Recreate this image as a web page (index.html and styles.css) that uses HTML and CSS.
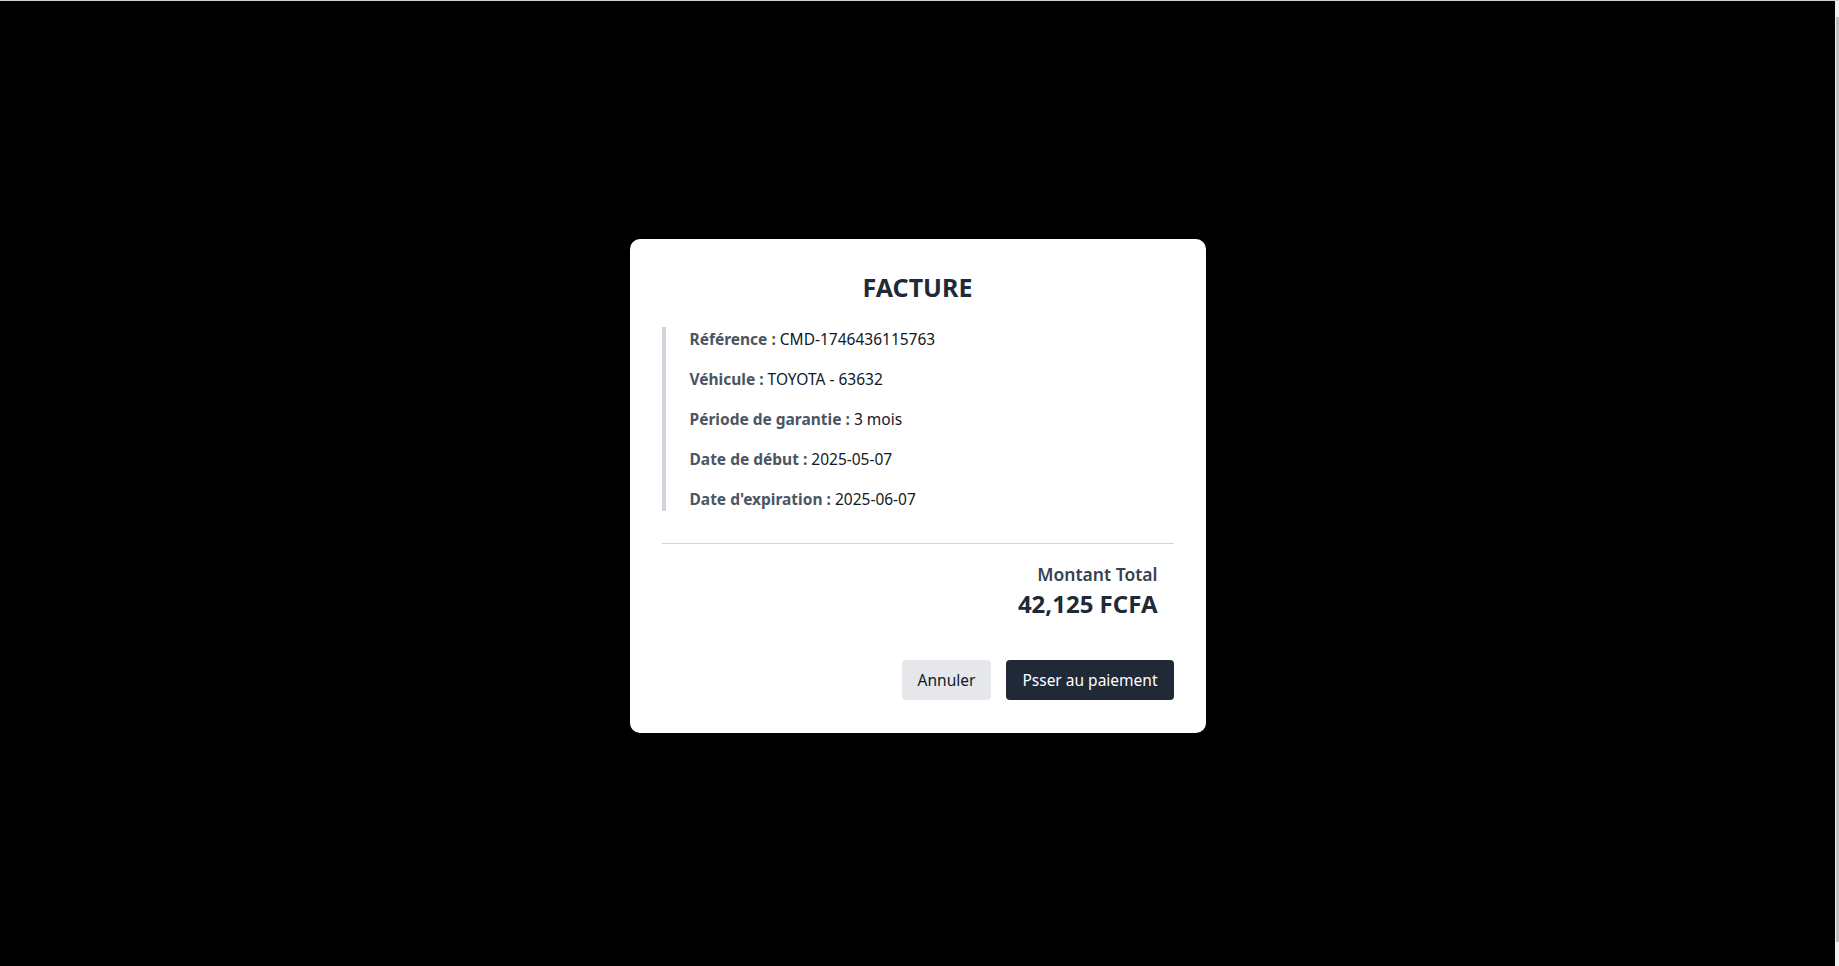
FILE: index.html
```html
<!DOCTYPE html>
<html lang="fr">
<head>
<meta charset="utf-8">
<title>Facture</title>
<link rel="stylesheet" href="styles.css">
</head>
<body>
<div class="page">
  <div class="overlay">
    <div class="modal">
      <h2 class="modal-title">FACTURE</h2>
      <div class="details">
        <p class="row"><span class="label">Référence :</span> CMD-1746436115763</p>
        <p class="row"><span class="label">Véhicule :</span> TOYOTA - 63632</p>
        <p class="row"><span class="label">Période de garantie :</span> 3 mois</p>
        <p class="row"><span class="label">Date de début :</span> 2025-05-07</p>
        <p class="row"><span class="label">Date d'expiration :</span> 2025-06-07</p>
      </div>
      <div class="total">
        <p class="total-label">Montant Total</p>
        <p class="total-amount">42,125 FCFA</p>
      </div>
      <div class="actions">
        <button class="btn btn-cancel">Annuler</button>
        <button class="btn btn-pay">Psser au paiement</button>
      </div>
    </div>
  </div>
  <div class="scrollbar"><div class="scroll-thumb"></div></div>
</div>
</body>
</html>
```

FILE: styles.css
```css
* { box-sizing: border-box; }
html, body { margin: 0; padding: 0; height: 100%; }
body {
  font-family: "Noto Sans", "DejaVu Sans", sans-serif;
  background: #000;
}
.page {
  display: flex;
  height: 100%;
  border-top: 1px solid #d0d0d0;
}
.overlay {
  flex: 1;
  background: #000;
  display: flex;
  align-items: center;
  justify-content: center;
  padding-top: 5px;
}
.scrollbar {
  width: 4px;
  background: #f1f1f1;
  padding: 16px 0 24px 1px;
}
.scroll-thumb {
  height: 100%;
  background: #c1c1c1;
}
.modal {
  width: 576px;
  background: #fff;
  border-radius: 10px;
  padding: 32px 32px 33px;
}
.modal-title {
  margin: 0 0 24px;
  text-align: center;
  font-size: 25px;
  line-height: 32px;
  font-weight: 700;
  color: #1f2937;
}
.details {
  border-left: 4px solid #d1d5db;
  padding-left: 24px;
  display: flex;
  flex-direction: column;
  gap: 16px;
  margin-bottom: 32px;
}
.row {
  margin: 0;
  font-size: 15.5px;
  line-height: 24px;
  color: #111827;
}
.label {
  font-weight: 700;
  color: #4b5563;
}
.total {
  border-top: 1px solid #d1d5db;
  padding: 16px;
  text-align: right;
}
.total-label {
  margin: 0;
  font-size: 17.5px;
  line-height: 28px;
  font-weight: 600;
  color: #374151;
}
.total-amount {
  margin: 0;
  font-size: 24px;
  line-height: 32px;
  font-weight: 700;
  color: #1f2937;
}
.actions {
  margin-top: 24px;
  display: flex;
  justify-content: flex-end;
  gap: 15px;
}
.btn {
  font-family: inherit;
  font-size: 15.5px;
  line-height: 24px;
  padding: 8px 16px;
  border: none;
  border-radius: 4px;
  cursor: pointer;
}
.btn-cancel {
  background: #e5e7eb;
  color: #111827;
}
.btn-pay {
  background: #1f2937;
  color: #fff;
}
```
